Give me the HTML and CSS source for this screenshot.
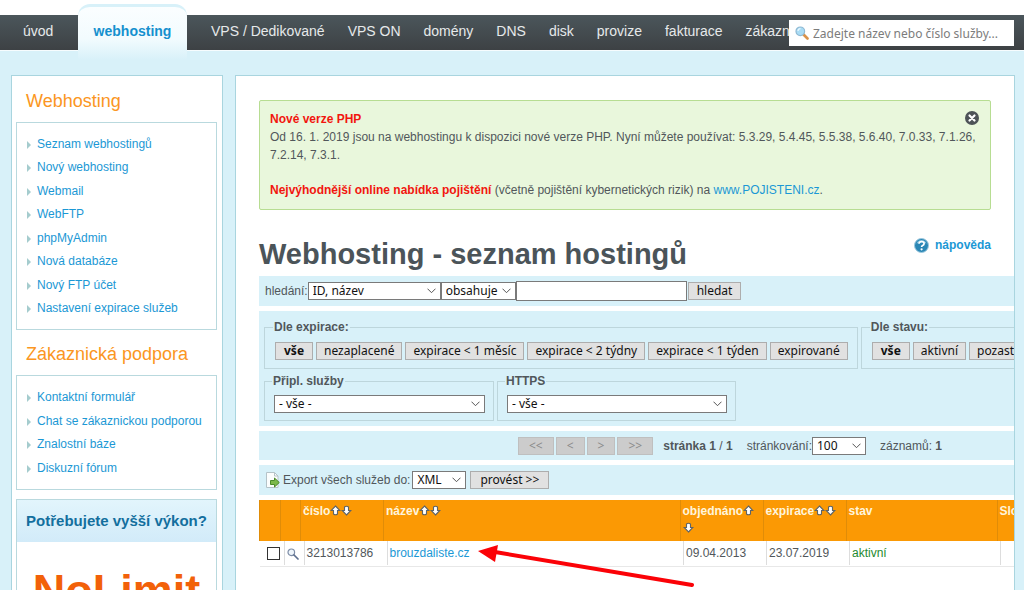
FILE: index.html
```html
<!DOCTYPE html>
<html lang="cs">
<head>
<meta charset="utf-8">
<title>Webhosting - seznam hostingů</title>
<link rel="stylesheet" href="styles.css">
</head>
<body>
<svg class="defs" aria-hidden="true">
  <symbol id="up" viewBox="0 0 11 11"><path d="M5.500 1 9.800 5.500H7.500V9Q5.500 10.500 3.500 9V5.500H1.200Z" fill="#fff" stroke="#5d6468" stroke-width="1.100"/></symbol>
  <symbol id="down" viewBox="0 0 11 11"><path d="M5.500 10 9.800 5.500H7.500V2Q5.500 .5 3.500 2V5.500H1.200Z" fill="#fff" stroke="#5d6468" stroke-width="1.100"/></symbol>
</svg>
<header class="top">
  <nav class="nav">
    <a class="nav-first" href="#">úvod</a>
    <a class="nav-active" href="#">webhosting</a>
    <div class="nav-rest">
      <a href="#">VPS / Dedikované</a><a href="#">VPS ON</a><a href="#">domény</a><a href="#">DNS</a><a href="#">disk</a><a href="#">provize</a><a href="#">fakturace</a><a href="#">zákazník</a>
    </div>
  </nav>
  <form class="search">
    <svg width="14" height="14" viewBox="0 0 14 14" aria-hidden="true"><path d="m8.500 8.500 4 4" stroke="#d9924a" stroke-width="2.600" stroke-linecap="round"/><circle cx="5.300" cy="5.300" r="4.300" fill="#a9dcf5" stroke="#8fb9d3" stroke-width="1.200"/><path d="M3 5a2.500 2.500 0 0 1 2.500-2.300" fill="none" stroke="#e9f8ff" stroke-width="1.200"/></svg>
    <input type="text" aria-label="Hledat službu" placeholder="Zadejte název nebo číslo služby...">
  </form>
</header>
<div class="page">
  <aside class="side">
    <h2>Webhosting</h2>
    <ul class="menu">
      <li><a href="#">Seznam webhostingů</a></li>
      <li><a href="#">Nový webhosting</a></li>
      <li><a href="#">Webmail</a></li>
      <li><a href="#">WebFTP</a></li>
      <li><a href="#">phpMyAdmin</a></li>
      <li><a href="#">Nová databáze</a></li>
      <li><a href="#">Nový FTP účet</a></li>
      <li><a href="#">Nastavení expirace služeb</a></li>
    </ul>
    <h2>Zákaznická podpora</h2>
    <ul class="menu short">
      <li><a href="#">Kontaktní formulář</a></li>
      <li><a href="#">Chat se zákaznickou podporou</a></li>
      <li><a href="#">Znalostní báze</a></li>
      <li><a href="#">Diskuzní fórum</a></li>
    </ul>
    <section class="promo">
      <h3>Potřebujete vyšší výkon?</h3>
      <p>NoLimit</p>
    </section>
  </aside>
  <main class="main">
    <section class="notice">
      <button class="close" type="button" aria-label="Zavřít"><svg width="14" height="14" viewBox="0 0 14 14"><circle cx="7" cy="7" r="7" fill="#4d5357"/><path d="m4.500 4.500 5 5m0-5-5 5" stroke="#fff" stroke-width="2.200" stroke-linecap="round"/></svg></button>
      <strong>Nové verze PHP</strong>
      <p>Od 16. 1. 2019 jsou na webhostingu k dispozici nové verze PHP. Nyní můžete používat: 5.3.29, 5.4.45, 5.5.38, 5.6.40, 7.0.33, 7.1.26, 7.2.14, 7.3.1.</p>
      <p class="offer"><strong>Nejvýhodnější online nabídka pojištění</strong> (včetně pojištění kybernetických rizik) na <a href="#">www.POJISTENI.cz</a>.</p>
    </section>
    <div class="title">
      <h1>Webhosting - seznam hostingů</h1>
      <a class="help" href="#"><svg width="15" height="15" viewBox="0 0 15 15" aria-hidden="true"><circle cx="7.500" cy="7.500" r="7" fill="#2b87b5" stroke="#9cc8de"/><path d="M2.500 5.500a5.300 5.300 0 0 1 10 0Q7 4 2.500 5.500" fill="#7fbfdd"/><path d="M5 5.800q.2-2.300 2.600-2.300t2.500 2q0 1.400-1.500 2.100-1 .5-1 1.500" fill="none" stroke="#fff" stroke-width="1.700"/><circle cx="7.600" cy="11.300" r="1.100" fill="#fff"/></svg>nápověda</a>
    </div>
    <div class="list">
      <form class="band find">
        <label for="field">hledání:</label>
        <select id="field" class="w-field"><option>ID, název</option></select>
        <select class="w-op" aria-label="Podmínka"><option>obsahuje</option></select>
        <input class="w-text" type="text" aria-label="Hledaný text">
        <button type="button">hledat</button>
      </form>
      <div class="band filters">
        <div class="filter-row">
          <fieldset><legend>Dle expirace:</legend><div class="buttons"><button class="on" type="button">vše</button><button type="button">nezaplacené</button><button type="button">expirace &lt; 1 měsíc</button><button type="button">expirace &lt; 2 týdny</button><button type="button">expirace &lt; 1 týden</button><button type="button">expirované</button></div></fieldset>
          <fieldset><legend>Dle stavu:</legend><div class="buttons"><button class="on" type="button">vše</button><button type="button">aktivní</button><button type="button">pozastavené</button></div></fieldset>
        </div>
        <div class="filter-row low">
          <fieldset><legend>Připl. služby</legend><select class="w-wide" aria-label="Připl. služby"><option>- vše -</option></select></fieldset>
          <fieldset><legend>HTTPS</legend><select class="w-https" aria-label="HTTPS"><option>- vše -</option></select></fieldset>
        </div>
      </div>
      <div class="band pager">
        <div class="buttons"><button type="button" disabled>&lt;&lt;</button><button type="button" disabled>&lt;</button><button type="button" disabled>&gt;</button><button type="button" disabled>&gt;&gt;</button></div>
        <span><b>stránka 1</b> / <b>1</b></span>
        <span class="per"><label for="per">stránkování:</label><select id="per" class="w-small"><option>100</option></select></span>
        <span>záznamů: <b>1</b></span>
      </div>
      <form class="band export">
        <svg width="15" height="16" viewBox="0 0 15 16" aria-hidden="true"><path d="M1.500.5h8l3.500 3.500v11.500H1.500Z" fill="#fbfdfd" stroke="#b5c3c8"/><path d="M9.500.5V4H13" fill="none" stroke="#b5c3c8"/><path d="M5.500 8.500H9.500V6L14.300 10.500 9.500 15V12.500H5.500Z" fill="#7bb84a" stroke="#4b8a2b"/></svg>
        <label for="exp">Export všech služeb do:</label>
        <select id="exp" class="w-small"><option>XML</option></select>
        <button type="button">provést &gt;&gt;</button>
      </form>
      <table class="grid">
        <colgroup><col class="c1"><col class="c2"><col class="c3"><col class="c4"><col class="c5"><col class="c5"><col class="c7"><col class="c8"></colgroup>
        <thead><tr>
          <th></th><th></th>
          <th>číslo<svg><use href="#up"/></svg><svg><use href="#down"/></svg></th>
          <th>název<svg><use href="#up"/></svg><svg><use href="#down"/></svg></th>
          <th>objednáno<svg><use href="#up"/></svg> <svg><use href="#down"/></svg></th>
          <th>expirace<svg><use href="#up"/></svg><svg><use href="#down"/></svg></th>
          <th>stav</th><th>Slo</th>
        </tr></thead>
        <tbody><tr>
          <td class="check"><input type="checkbox" aria-label="Vybrat 3213013786"></td>
          <td><div><svg class="lens" viewBox="0 0 12 12" aria-hidden="true"><circle cx="4.300" cy="4.300" r="3.300" fill="#eef5fb" stroke="#7d8ca6" stroke-width="1.200"/><path d="m7 7 4 4" stroke="#5d6f8f" stroke-width="1.700" stroke-linecap="round"/></svg></div></td>
          <td><div>3213013786</div></td>
          <td class="name"><div><a href="#">brouzdaliste.cz</a></div>
            <svg class="arrow" width="218" height="44" viewBox="0 0 218 44" aria-hidden="true"><path d="M18 7 215 40" stroke="#fb0207" stroke-width="4" stroke-linecap="round"/><path d="M1 6 21 0 18 17Z" fill="#fb0207"/></svg></td>
          <td><div>09.04.2013</div></td>
          <td><div>23.07.2019</div></td>
          <td><div class="ok">aktivní</div></td>
          <td><div></div></td>
        </tr></tbody>
      </table>
    </div>
  </main>
</div>
</body>
</html>
```
FILE: styles.css
```css
* { box-sizing: border-box; }
body {
  margin: 0;
  height: 100vh;
  overflow: hidden;
  background: #d8f1f9;
  color: #51575b;
  font: 12px/18px "Liberation Sans", Arial, sans-serif;
}
a { color: #1b98d5; text-decoration: none; }
h1, h2, h3, p, ul { margin: 0; padding: 0; }
.defs { display: none; }

.top { position: relative; padding-top: 15px; background: #fff; }
.nav {
  display: flex;
  height: 35px;
  background: linear-gradient(#4b565b, #3d4144);
  font-size: 14px;
  line-height: 33px;
}
.nav a { color: #e6e9ea; white-space: nowrap; }
.top::after { content: ""; display: block; height: 1px; background: #f6fcfe; }
.nav .nav-first { width: 78px; padding-left: 23px; flex: none; }
.nav .nav-active {
  flex: none;
  width: 109px;
  height: 56px;
  margin-top: -11px;
  padding-top: 11px;
  border-top: 3px solid #d8f1f9;
  border-radius: 12px 12px 0 0;
  background: linear-gradient(#fbfeff, #f2fbfe 60%, #d8f1f9);
  color: #1590ce;
  font-weight: bold;
  line-height: 27px;
  text-align: center;
  z-index: 1;
}
.nav-rest { display: flex; gap: 23px; padding-left: 24px; min-width: 0; overflow: hidden; }
.search {
  position: absolute;
  top: 20px;
  right: 10px;
  z-index: 2;
  display: flex;
  align-items: center;
  gap: 4px;
  width: 225px;
  height: 26px;
  padding: 0 6px;
  background: #fff;
}
.search svg { flex: none; }
.search input {
  flex: 1;
  min-width: 0;
  padding: 0;
  border: 0;
  background: none;
  font: 12px "Noto Sans", sans-serif;
}
.search input::placeholder { color: #7c7c7c; }

.page { display: flex; align-items: flex-start; gap: 12px; padding: 24px 9px 0 11px; }
.side, .main { background: #fff; border: 1px solid #a9d5df; }
.side { flex: none; width: 212px; min-height: 600px; padding: 12px 5px 0 4px; }
.side h2 {
  padding: 0 0 8px 10px;
  color: #fb9622;
  font-size: 18px;
  font-weight: normal;
  line-height: 26px;
}
.menu {
  display: flex;
  flex-direction: column;
  justify-content: space-between;
  min-height: 208px;
  margin-bottom: 11px;
  padding: 10px 0 9px 20px;
  border: 1px solid #b9d9de;
  list-style: none;
}
.menu.short { min-height: 115px; margin-bottom: 9px; }
.menu li { position: relative; line-height: 23px; }
.menu li::before {
  content: "";
  position: absolute;
  left: -10px;
  top: 8px;
  border: 4px solid transparent;
  border-left: 4px solid #a5ccce;
  border-right: 0;
}
.promo { border: 1px solid #b9d9de; }
.promo h3 {
  background: linear-gradient(#e2f5fc, #d2ebf9);
  color: #136f9e;
  font-size: 15px;
  line-height: 42px;
  text-align: center;
  white-space: nowrap;
}
.promo p {
  padding-top: 22px;
  color: #f26109;
  font: bold 45px/54px "Liberation Sans", Arial, sans-serif;
  text-align: center;
}

.main { flex: 1; min-width: 0; min-height: 600px; padding: 24px 0 0 23px; overflow: hidden; }
.notice {
  position: relative;
  margin-right: 23px;
  padding: 9px 10px 10px;
  border: 1px solid #b7dd92;
  border-radius: 2px;
  background: #e9f7dc;
  line-height: 18px;
}
.notice strong { color: #f2160f; }
.notice .offer { padding-top: 17px; }
.notice .close { position: absolute; top: 10px; right: 11px; height: 14px; padding: 0; border: 0; background: none; }
.close svg { display: block; }
.title { display: flex; justify-content: space-between; align-items: flex-start; margin-right: 23px; padding-top: 26px; }
h1 { color: #4b5459; font-size: 29px; line-height: 36px; padding-bottom: 4px; }
.help { display: flex; align-items: center; gap: 6px; font-weight: bold; }

.band { display: flex; align-items: center; margin-bottom: 5px; padding-left: 6px; background: #d8f1f9; white-space: nowrap; }
button, select, .w-text { height: 18px; font: 12px/16px "Noto Sans", sans-serif; color: #111; border-radius: 0; }
button { padding: 0 8px; border: 1px solid #adadad; background: #e1e1e1; white-space: nowrap; }
button:disabled { color: #8a8a8a; background: #ccc; border-color: #bfbfbf; }
select {
  appearance: none;
  margin: 0;
  padding: 0 16px 0 4px;
  border: 1px solid #7a7a7a;
  background: #fff url("data:image/svg+xml,%3Csvg xmlns='http://www.w3.org/2000/svg' width='9' height='6'%3E%3Cpath d='M.5 .7 4.500 4.700 8.500 .7' fill='none' stroke='%23555'/%3E%3C/svg%3E") no-repeat right 4px center;
}
.find { height: 30px; }
.w-field { width: 133px; }
.w-op { width: 75px; }
.w-text { width: 171px; height: 20px; padding: 0 4px; border: 1px solid #7a7a7a; background: #fff; }
.find button { margin-left: 1px; }
.filters { display: block; padding: 8px 0 5px 5px; }
.filter-row { display: flex; gap: 3px; }
fieldset { flex: none; margin: 0; padding: 7px 9px 8px 10px; border: 1px solid #bdd6dc; min-width: 0; }
legend { padding: 0 1px; margin-left: -2px; font-weight: bold; line-height: 16px; }
.buttons { display: flex; gap: 3px; }
.filters button { padding: 0 7px; }
.filters .on { font-weight: bold; padding: 0 8px; }
.low { margin-top: 4px; }
.low fieldset { padding: 6px 8px 7px 9px; }
.low select { display: block; }
.w-wide { width: 211px; }
.w-https { width: 220px; }
.pager { height: 29px; gap: 10px; padding-left: 259px; }
.pager .buttons { gap: 2px; }
.pager button { padding: 0 10px; }
.per, .per + span { margin-left: 4px; }
.per { display: flex; align-items: center; }
.w-small { width: 54px; }
.export { height: 30px; }
.export svg { margin-right: 3px; }
.export select { margin: 0 4px 0 2px; }
.export button { padding: 0 9px; }

.grid { width: 100%; border-collapse: collapse; table-layout: fixed; }
.c1 { width: 21px; } .c2 { width: 20px; } .c3 { width: 83px; }
.c5 { width: 83px; } .c7 { width: 151px; } .c8 { width: 17px; }
th {
  height: 41px;
  padding: 3px 0 0 2px;
  border-left: 1px solid #e08c08;
  background: #fb9904;
  color: #fff5dc;
  font-size: 12px;
  line-height: 17px;
  text-align: left;
  vertical-align: top;
  overflow: hidden;
}
th svg { width: 11px; height: 11px; vertical-align: -1px; }
td { height: 25px; padding: 0 0 0 3px; border-bottom: 1px solid #e8e8e8; }
td div { height: 24px; padding-left: 2px; border-left: 1px solid #ddd; line-height: 24px; }
td.check { padding-left: 7px; }
.check input { display: block; appearance: none; width: 13px; height: 13px; margin: 0; border: 1px solid #333; background: #fff; }
.lens { width: 12px; height: 12px; vertical-align: -3px; }
.name { position: relative; }
.arrow { position: absolute; left: 93px; top: 4px; z-index: 1; }
.ok { color: #1f8a2e; }
```
